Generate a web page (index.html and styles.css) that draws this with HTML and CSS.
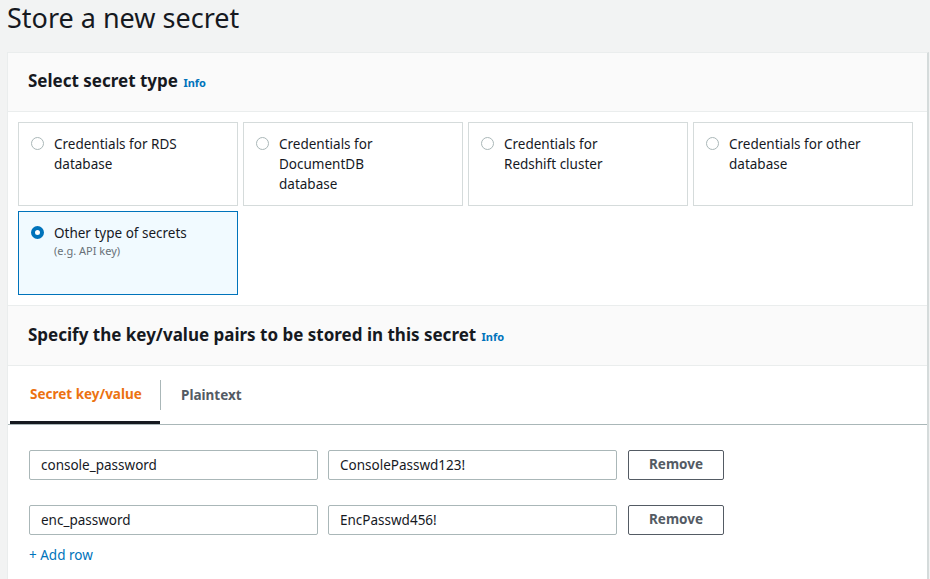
FILE: index.html
```html
<!DOCTYPE html>
<html>
<head>
<meta charset="utf-8">
<link rel="stylesheet" href="styles.css">
</head>
<body>
<h1 class="page-title">Store a new secret</h1>
<div class="container">
  <div class="section-header">
    <h2 class="section-title">Select secret type <span class="info">Info</span></h2>
  </div>
  <div class="section-body">
    <div class="tiles">
      <label class="tile"><span class="radio"></span><span class="tile-text">Credentials for RDS database</span></label>
      <label class="tile"><span class="radio"></span><span class="tile-text">Credentials for DocumentDB database</span></label>
      <label class="tile"><span class="radio"></span><span class="tile-text">Credentials for Redshift cluster</span></label>
      <label class="tile"><span class="radio"></span><span class="tile-text">Credentials for other database</span></label>
      <label class="tile selected"><span class="radio checked"></span><span class="tile-text wide">Other type of secrets<span class="tile-desc">(e.g. API key)</span></span></label>
    </div>
  </div>
  <div class="section-header second">
    <h2 class="section-title">Specify the key/value pairs to be stored in this secret <span class="info">Info</span></h2>
  </div>
  <div class="tabs">
    <div class="tab active">Secret key/value</div>
    <div class="tab-sep"></div>
    <div class="tab">Plaintext</div>
  </div>
  <div class="kv">
    <div class="kv-row">
      <div class="input">console_password</div>
      <div class="input">ConsolePasswd123!</div>
      <div class="btn">Remove</div>
    </div>
    <div class="kv-row">
      <div class="input">enc_password</div>
      <div class="input">EncPasswd456!</div>
      <div class="btn">Remove</div>
    </div>
    <div class="add-row">+ Add row</div>
  </div>
</div>
</body>
</html>
```
FILE: styles.css
```css
html, body {
  margin: 0;
  padding: 0;
  background: #f2f3f3;
  font-family: "Noto Sans", "Open Sans", Arial, sans-serif;
  color: #16191f;
}
body {
  padding: 0 1px 0 7px;
  overflow: hidden;
  height: 579px;
}
.page-title {
  margin: 0;
  font-size: 27px;
  font-weight: 400;
  line-height: 36px;
  height: 52px;
  box-sizing: border-box;
}
.container {
  background: #fff;
  border-top: 1px solid #eaeded;
  border-right: 2px solid #d5dbdb;
  border-left: 1px solid #eaeded;
  height: 600px;
}
.section-header {
  background: #fafafa;
  height: 58px;
  border-bottom: 1px solid #eaeded;
  display: flex;
  align-items: center;
  padding-left: 20px;
}
.section-header.second {
  border-top: 1px solid #eaeded;
  height: 59px;
}
.section-title {
  margin: 0;
  font-size: 17px;
  font-weight: 700;
  line-height: 22px;
}
.info {
  font-size: 11px;
  color: #0073bb;
  font-weight: 700;
  margin-left: 1px;
}
.section-body {
  padding: 10px 16px 10px 10px;
}
.tiles {
  display: grid;
  grid-template-columns: repeat(4, 220px);
  gap: 5px 5px;
}
.tile {
  display: flex;
  align-items: flex-start;
  border: 1px solid #d5dbdb;
  height: 84px;
  box-sizing: border-box;
  padding: 11px 12px;
  font-size: 13.5px;
  line-height: 20px;
}
.tile.selected {
  background: #f1faff;
  border-color: #0073bb;
}
.radio {
  width: 13px;
  height: 13px;
  border: 1px solid #aab7b8;
  border-radius: 50%;
  box-sizing: border-box;
  margin-top: 3px;
  margin-right: 10px;
  flex: none;
  background: #fff;
}
.radio.checked {
  border: 4px solid #0073bb;
}
.tile-text {
  width: 134px;
}
.tile-text.wide {
  width: 160px;
}
.tile-desc {
  display: block;
  font-size: 11px;
  line-height: 16px;
  color: #687078;
}
.tabs {
  display: flex;
  align-items: center;
  height: 58px;
  border-bottom: 1px solid #aab7b8;
  padding-left: 2px;
}
.tab {
  font-size: 13.5px;
  font-weight: 700;
  color: #545b64;
  padding: 0 20px;
  height: 58px;
  line-height: 58px;
  box-sizing: border-box;
  white-space: nowrap;
}
.tab.active {
  color: #ec7211;
  border-bottom: 3px solid #16191f;
  width: 150px;
  padding-right: 0;
  line-height: 57px;
}
.tab-sep {
  width: 1px;
  height: 30px;
  background: #aab7b8;
}
.kv {
  padding: 25px 0 0 21px;
}
.kv-row {
  display: flex;
  gap: 10px;
  margin-bottom: 25px;
}
.input {
  width: 289px;
  height: 30px;
  box-sizing: border-box;
  border: 1px solid #aab7b8;
  border-radius: 2px;
  font-size: 13.5px;
  line-height: 28px;
  padding-left: 11px;
}
.btn {
  width: 96px;
  height: 30px;
  box-sizing: border-box;
  border: 1px solid #545b64;
  border-radius: 2px;
  font-size: 13.5px;
  font-weight: 700;
  color: #545b64;
  text-align: center;
  line-height: 27px;
  margin-left: 1px;
}
.add-row {
  font-size: 13.5px;
  color: #0073bb;
  margin-top: -14px;
}
```
